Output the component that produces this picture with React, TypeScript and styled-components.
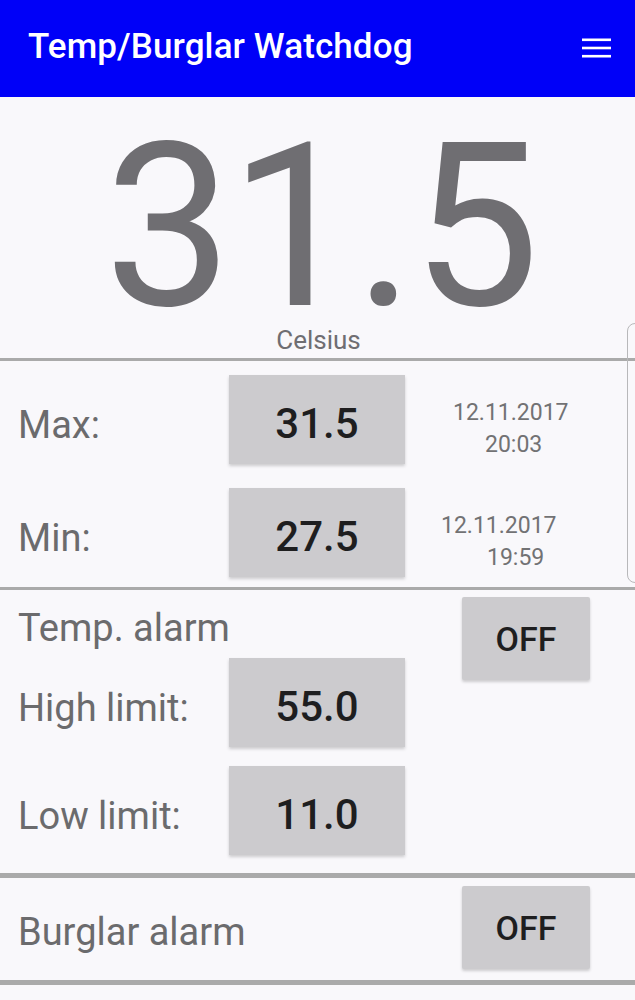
import styled, { createGlobalStyle } from 'styled-components';

const GlobalStyle = createGlobalStyle`
  html, body {
    margin: 0;
    padding: 0;
    background: #f9f8fb;
  }
  body {
    font-family: Roboto, "Liberation Sans", sans-serif;
  }
`;

const App = () => {
  return (
    <Page>
      <GlobalStyle />
      <AppBar>
        <Title>Temp/Burglar Watchdog</Title>
        <MenuIcon width="29" height="20" viewBox="0 0 29 20">
          <rect x="0" y="0.5" width="29" height="2.6" fill="#fff" />
          <rect x="0" y="8.7" width="29" height="2.6" fill="#fff" />
          <rect x="0" y="16.9" width="29" height="2.6" fill="#fff" />
        </MenuIcon>
      </AppBar>

      <Reading>
        <BigTemp>31.5</BigTemp>
        <Unit>Celsius</Unit>
      </Reading>
      <Divider />

      <Section>
        <Row>
          <Label>Max:</Label>
          <ValueBox>31.5</ValueBox>
          <Stamp>
            <StampLine $indent={12}>12.11.2017</StampLine>
            <StampLine $indent={44}>20:03</StampLine>
          </Stamp>
        </Row>
        <Row>
          <Label>Min:</Label>
          <ValueBox>27.5</ValueBox>
          <Stamp>
            <StampLine $indent={0}>12.11.2017</StampLine>
            <StampLine $indent={46}>19:59</StampLine>
          </Stamp>
        </Row>
      </Section>
      <Divider />

      <AlarmGrid>
        <AlarmTitle>Temp. alarm</AlarmTitle>
        <AlarmToggle>OFF</AlarmToggle>
        <Label>High limit:</Label>
        <ValueBox>55.0</ValueBox>
        <Label>Low limit:</Label>
        <ValueBox>11.0</ValueBox>
      </AlarmGrid>
      <Divider $thick />

      <BurglarRow>
        <Label>Burglar alarm</Label>
        <ToggleButton>OFF</ToggleButton>
      </BurglarRow>
      <Divider $thick />

      <ScrollHint />
    </Page>
  );
};

const Page = styled.div`
  position: relative;
  width: 635px;
  min-height: 1000px;
  background: #f9f8fb;
  overflow: hidden;
`;

const AppBar = styled.header`
  height: 97px;
  background: #0000f8;
  display: flex;
  align-items: center;
  justify-content: space-between;
  padding: 0 24px 0 28px;
  box-sizing: border-box;
`;

const Title = styled.h1`
  margin: 0;
  color: #fff;
  font-size: 35px;
  font-weight: 500;
  letter-spacing: 0.1px;
  padding-bottom: 4px;
`;

const MenuIcon = styled.svg`
  display: block;
  margin-bottom: 1px;
`;

const Reading = styled.div`
  height: 261px;
  display: flex;
  flex-direction: column;
  align-items: center;
  box-sizing: border-box;
  padding-top: 40px;
`;

const BigTemp = styled.div`
  font-size: 228px;
  font-weight: 400;
  line-height: 180px;
  color: #6f6e72;
  letter-spacing: -3px;
  padding-left: 6px;
`;

const Unit = styled.div`
  margin-top: 10px;
  font-size: 26px;
  line-height: 26px;
  color: #6f6e72;
  padding-left: 2px;
`;

const Divider = styled.div<{ $thick?: boolean }>`
  height: ${({ $thick }) => ($thick ? '5px' : '3px')};
  background: #aaaaaa;
`;

const Section = styled.div`
  display: flex;
  flex-direction: column;
  gap: 24px;
  padding: 14px 0 10px;
`;

const Row = styled.div`
  display: grid;
  grid-template-columns: 229px 176px 1fr;
  align-items: center;
`;

const Label = styled.div`
  padding: 10px 0 0 18px;
  font-size: 38px;
  color: #6b6b6d;
  white-space: nowrap;
`;

const ValueBox = styled.div`
  height: 89px;
  box-sizing: border-box;
  padding-top: 8px;
  background: #cccbce;
  box-shadow: 0 2px 3px rgba(0, 0, 0, 0.18);
  display: flex;
  align-items: center;
  justify-content: center;
  font-size: 42px;
  font-weight: 500;
  color: #1e1e1f;
`;

const Stamp = styled.div`
  padding: 18px 0 0 36px;
  font-size: 23px;
  line-height: 32px;
  color: #727274;
`;

const StampLine = styled.div<{ $indent: number }>`
  padding-left: ${({ $indent }) => $indent}px;
`;

const AlarmGrid = styled.div`
  display: grid;
  grid-template-columns: 229px 176px 1fr;
  grid-template-rows: 42px 89px 89px;
  row-gap: 19px;
  align-items: center;
  padding: 7px 0 18px;
`;

const AlarmTitle = styled(Label)`
  grid-column: 1 / span 2;
  align-self: start;
  padding-top: 0;
  margin-top: 12px;
  line-height: 38px;
`;

const ToggleButton = styled.button`
  width: 128px;
  height: 83px;
  padding: 0;
  border: none;
  border-radius: 2px;
  background: #cccbce;
  box-shadow: 0 2px 3px rgba(0, 0, 0, 0.18);
  font-family: Roboto, "Liberation Sans", sans-serif;
  font-size: 34px;
  font-weight: 500;
  color: #1e1e1f;
  flex-shrink: 0;
`;

const AlarmToggle = styled(ToggleButton)`
  grid-column: 3;
  grid-row: 1 / span 2;
  align-self: start;
  justify-self: end;
  margin-right: 45px;
`;

const BurglarRow = styled.div`
  display: flex;
  justify-content: space-between;
  align-items: center;
  padding: 8px 45px 11px 0;

  & > ${Label} {
    padding-top: 8px;
  }
`;

const ScrollHint = styled.div`
  position: absolute;
  right: -10px;
  top: 323px;
  width: 18px;
  height: 260px;
  border: 1px solid #b8b8ba;
  border-radius: 8px;
  box-sizing: border-box;
`;

export default App;
